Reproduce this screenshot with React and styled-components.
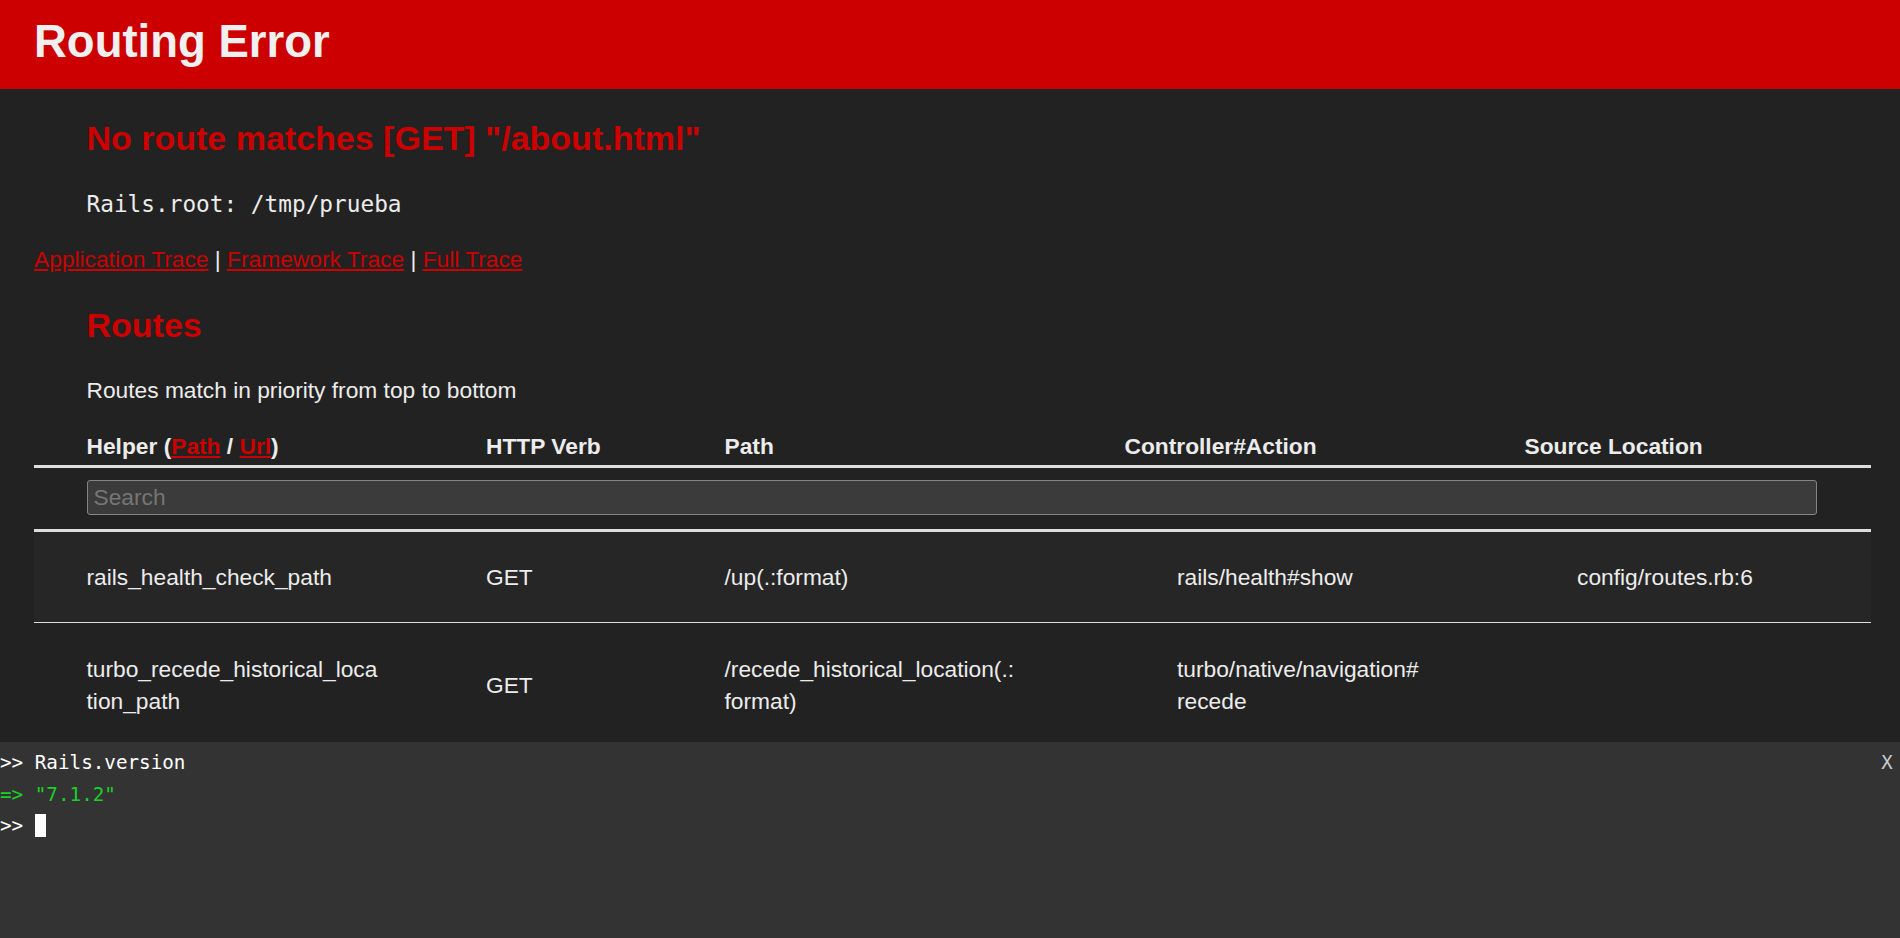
import React from "react";
import styled, { createGlobalStyle } from "styled-components";

const GlobalStyle = createGlobalStyle`
  html, body {
    margin: 0;
    padding: 0;
    background-color: #222;
  }
  body {
    font-family: "Liberation Sans", Arial, Helvetica, sans-serif;
    color: #ECECEC;
  }
`;

const Page = styled.div`
  display: flex;
  flex-direction: column;
  height: 100vh;
  overflow: hidden;
  background-color: #222;
`;

const Header = styled.header`
  flex: none;
  height: 89px;
  box-sizing: border-box;
  padding: 17px 34px 0;
  background: #cc0000;
  color: #f0f0f0;
`;

const Title = styled.h1`
  margin: 0;
  font-size: 45.5px;
  line-height: 50px;
  font-weight: bold;
`;

const Container = styled.main`
  flex: 1;
  min-height: 0;
  overflow: hidden;
  padding: 0 29px 0 34px;
`;

const Heading = styled.h2`
  margin: ${(p) => p.$top}px 0 0;
  padding-left: 52.5px;
  font-size: 34px;
  line-height: 44px;
  font-weight: bold;
  color: #cc0000;
`;

const Para = styled.p`
  margin: ${(p) => p.$top}px 0 0;
  padding-left: 52.5px;
  font-size: 22.75px;
  line-height: 32px;
`;

const Code = styled.code`
  font-family: "DejaVu Sans Mono", "Liberation Mono", monospace;
  font-size: 22.75px;
`;

const TraceLinks = styled.div`
  margin-top: 23px;
  font-size: 22.75px;
  line-height: 32px;
`;

const RedLink = styled.a`
  color: #cc0000;
  text-decoration: underline;
  cursor: pointer;
`;

const Table = styled.div`
  margin-top: 24px;
  display: grid;
  grid-template-columns: 399.5px 238.5px 452.5px 400px 346.5px;
  width: 1837px;
  font-size: 22.75px;
  line-height: 32px;
`;

const HeadRow = styled.div`
  display: contents;
`;

const Th = styled.div`
  padding: 0 0 3px ${(p) => (p.$flush ? 0 : 52.5)}px;
  font-weight: bold;
  border-bottom: 3.5px solid #ddd;
  white-space: nowrap;
`;

const SearchCell = styled.div`
  grid-column: 1 / -1;
  padding: 11.5px 54px 14px 52.5px;
  border-bottom: 3.5px solid #ddd;
  line-height: 0;
`;

const SearchInput = styled.input`
  box-sizing: border-box;
  width: 100%;
  height: 35px;
  margin: 0;
  padding: 0 6px;
  border: 1px solid #858585;
  border-radius: 3px;
  background: #3b3b3b;
  color: #ececec;
  font-family: "Liberation Sans", Arial, sans-serif;
  font-size: 22.75px;
  outline: none;

  &::placeholder {
    color: #767676;
  }
`;

const Row = styled.div`
  display: contents;
`;

const Td = styled.div`
  display: flex;
  align-items: center;
  padding: 29.5px 52.5px 29px;
  background: ${(p) => (p.$odd ? "#262626" : "transparent")};
  border-bottom: 1px solid #ddd;
  overflow-wrap: break-word;
  min-width: 0;
`;

const Console = styled.div`
  flex: none;
  height: 196px;
  display: flex;
  justify-content: space-between;
  background: #333;
  padding-top: 5px;
  box-sizing: border-box;
  font-family: "DejaVu Sans Mono", "Liberation Mono", monospace;
  font-size: 19.25px;
  line-height: 31.5px;
`;

const Lines = styled.div`
  display: flex;
  flex-direction: column;
`;

const Line = styled.div`
  color: ${(p) => (p.$result ? "#1ad027" : "#fff")};
  white-space: pre;
`;

const Cursor = styled.span`
  display: inline-block;
  width: 11px;
  height: 23px;
  background: #fefefe;
  vertical-align: -5px;
`;

const CloseButton = styled.div`
  width: 24px;
  margin-right: 1px;
  text-align: center;
  color: #ccc;
  font-size: 19px;
  cursor: pointer;
`;

const routes = [
  {
    helper: ["rails_health_check_path"],
    verb: "GET",
    path: ["/up(.:format)"],
    action: ["rails/health#show"],
    source: "config/routes.rb:6",
  },
  {
    helper: ["turbo_recede_historical_loca", "tion_path"],
    verb: "GET",
    path: ["/recede_historical_location(.:", "format)"],
    action: ["turbo/native/navigation#", "recede"],
    source: "",
  },
];

const Lined = ({ parts }) =>
  parts.map((t, i) => (
    <React.Fragment key={i}>
      {i > 0 && <br />}
      {t}
    </React.Fragment>
  ));

export default function App() {
  return (
    <Page>
      <GlobalStyle />
      <Header>
        <Title>Routing Error</Title>
      </Header>
      <Container>
        <Heading $top={27}>No route matches [GET] "/about.html"</Heading>
        <Para $top={28}>
          <Code>Rails.root: /tmp/prueba</Code>
        </Para>
        <TraceLinks>
          <RedLink>Application Trace</RedLink> | <RedLink>Framework Trace</RedLink> |{" "}
          <RedLink>Full Trace</RedLink>
        </TraceLinks>
        <Heading $top={28}>Routes</Heading>
        <Para $top={27}>Routes match in priority from top to bottom</Para>
        <Table>
          <HeadRow>
            <Th>
              Helper (<RedLink>Path</RedLink> / <RedLink>Url</RedLink>)
            </Th>
            <Th>HTTP Verb</Th>
            <Th>Path</Th>
            <Th $flush>Controller#Action</Th>
            <Th $flush>Source Location</Th>
          </HeadRow>
          <SearchCell>
            <SearchInput type="search" placeholder="Search" />
          </SearchCell>
          {routes.map((r, i) => (
            <Row key={i}>
              <Td $odd={i % 2 === 0}>
                <span>
                  <Lined parts={r.helper} />
                </span>
              </Td>
              <Td $odd={i % 2 === 0}>{r.verb}</Td>
              <Td $odd={i % 2 === 0}>
                <span>
                  <Lined parts={r.path} />
                </span>
              </Td>
              <Td $odd={i % 2 === 0}>
                <span>
                  <Lined parts={r.action} />
                </span>
              </Td>
              <Td $odd={i % 2 === 0}>{r.source}</Td>
            </Row>
          ))}
        </Table>
      </Container>
      <Console>
        <Lines>
          <Line>{">> Rails.version"}</Line>
          <Line $result>{'=> "7.1.2"'}</Line>
          <Line>
            {">> "}
            <Cursor />
          </Line>
        </Lines>
        <CloseButton>X</CloseButton>
      </Console>
    </Page>
  );
}
